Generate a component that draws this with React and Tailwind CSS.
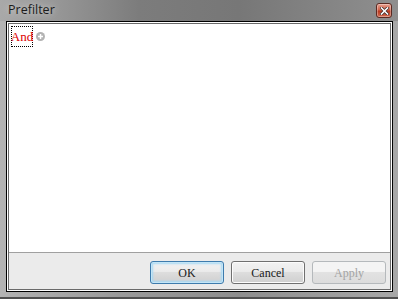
import React from 'react';

function CloseButton() {
  return (
    <div className="w-[16px] h-[15px] rounded-[3px] border border-[#5b2a22] bg-[linear-gradient(to_bottom,#e8a08f,#d0624a_45%,#b8381f_55%,#d06a4f)] flex items-center justify-center shadow-[inset_0_0_0_1px_rgba(255,255,255,0.35)]">
      <svg width="9" height="8" viewBox="0 0 9 8">
        <path d="M1.5 1 L7.5 7 M7.5 1 L1.5 7" stroke="#3a2a28" strokeWidth="3" strokeLinecap="square" />
        <path d="M1.5 1 L7.5 7 M7.5 1 L1.5 7" stroke="#ffffff" strokeWidth="1.6" strokeLinecap="square" />
      </svg>
    </div>
  );
}

function DialogButton({ label, primary, disabled }) {
  const base = "w-[74px] h-[23px] rounded-[3px] border flex items-center justify-center text-[12px] font-['Liberation_Serif',serif]";
  if (disabled) {
    return (
      <button className={`${base} border-[#b5b9bc] bg-[linear-gradient(to_bottom,#f4f4f4,#f4f4f4_45%,#e2e2e2_50%,#dcdcdc)] text-[#a3a3a3]`}>
        {label}
      </button>
    );
  }
  if (primary) {
    return (
      <button className={`${base} border-[#3d7bad] bg-[linear-gradient(to_bottom,#f2f2f2,#ebebeb_45%,#dddddd_50%,#cfcfcf)] shadow-[inset_0_0_0_1px_#c4e5f6,inset_0_0_2px_2px_#a7d9f5] text-[#1a1a1a]`}>
        {label}
      </button>
    );
  }
  return (
    <button className={`${base} border-[#707070] bg-[linear-gradient(to_bottom,#f2f2f2,#ebebeb_45%,#dddddd_50%,#cfcfcf)] shadow-[inset_0_0_0_1px_#fcfcfc] text-[#1a1a1a]`}>
      {label}
    </button>
  );
}

export default function App() {
  return (
    <div className="w-[398px] h-[299px] flex flex-col bg-[linear-gradient(to_right,#b3b3b3,#9a9a9a_30%,#8e8e8e_60%,#a8a8a8)] border-b-2 border-[#505050] font-['Open_Sans',sans-serif]">
      {/* title bar */}
      <div className="h-[21px] flex items-center justify-between pl-[8px] pr-[6px] bg-[linear-gradient(to_right,#a9a9a9,#7c7c7c_35%,#777777_60%,#8f8f8f)]">
        <span className="text-[12.5px] leading-none text-[#1b1b1b] [text-shadow:0_0_6px_#d8d8d8]">Prefilter</span>
        <CloseButton />
      </div>

      {/* client frame */}
      <div className="flex-1 ml-[6px] mr-[5px] mb-[5px] border border-black">
        <div className="h-full border border-white">
          <div className="h-full border border-[#6a6a6a] flex flex-col">
            <div className="flex-1 bg-white pl-[2px] pt-[2px]">
              <div className="flex items-center gap-[3px]">
                <div className="w-[22px] h-[21px] border border-dotted border-black flex items-center justify-center">
                  <span className="text-[13px] leading-none text-[#dd0000] font-['Liberation_Serif',serif]">And</span>
                </div>
                <svg width="9" height="9" viewBox="0 0 9 9" className="mt-[-1px]">
                  <circle cx="4.5" cy="4.5" r="4.5" fill="#b3b3b3" />
                  <path d="M4.5 2 V7 M2 4.5 H7" stroke="#ffffff" strokeWidth="1.5" />
                </svg>
              </div>
            </div>
            <div className="h-[37px] border-t border-[#a0a0a0] bg-[#ebebeb] flex justify-end items-start pt-[8px] pr-[4px] gap-[7px]">
              <DialogButton label="OK" primary />
              <DialogButton label="Cancel" />
              <DialogButton label="Apply" disabled />
            </div>
          </div>
        </div>
      </div>
    </div>
  );
}
